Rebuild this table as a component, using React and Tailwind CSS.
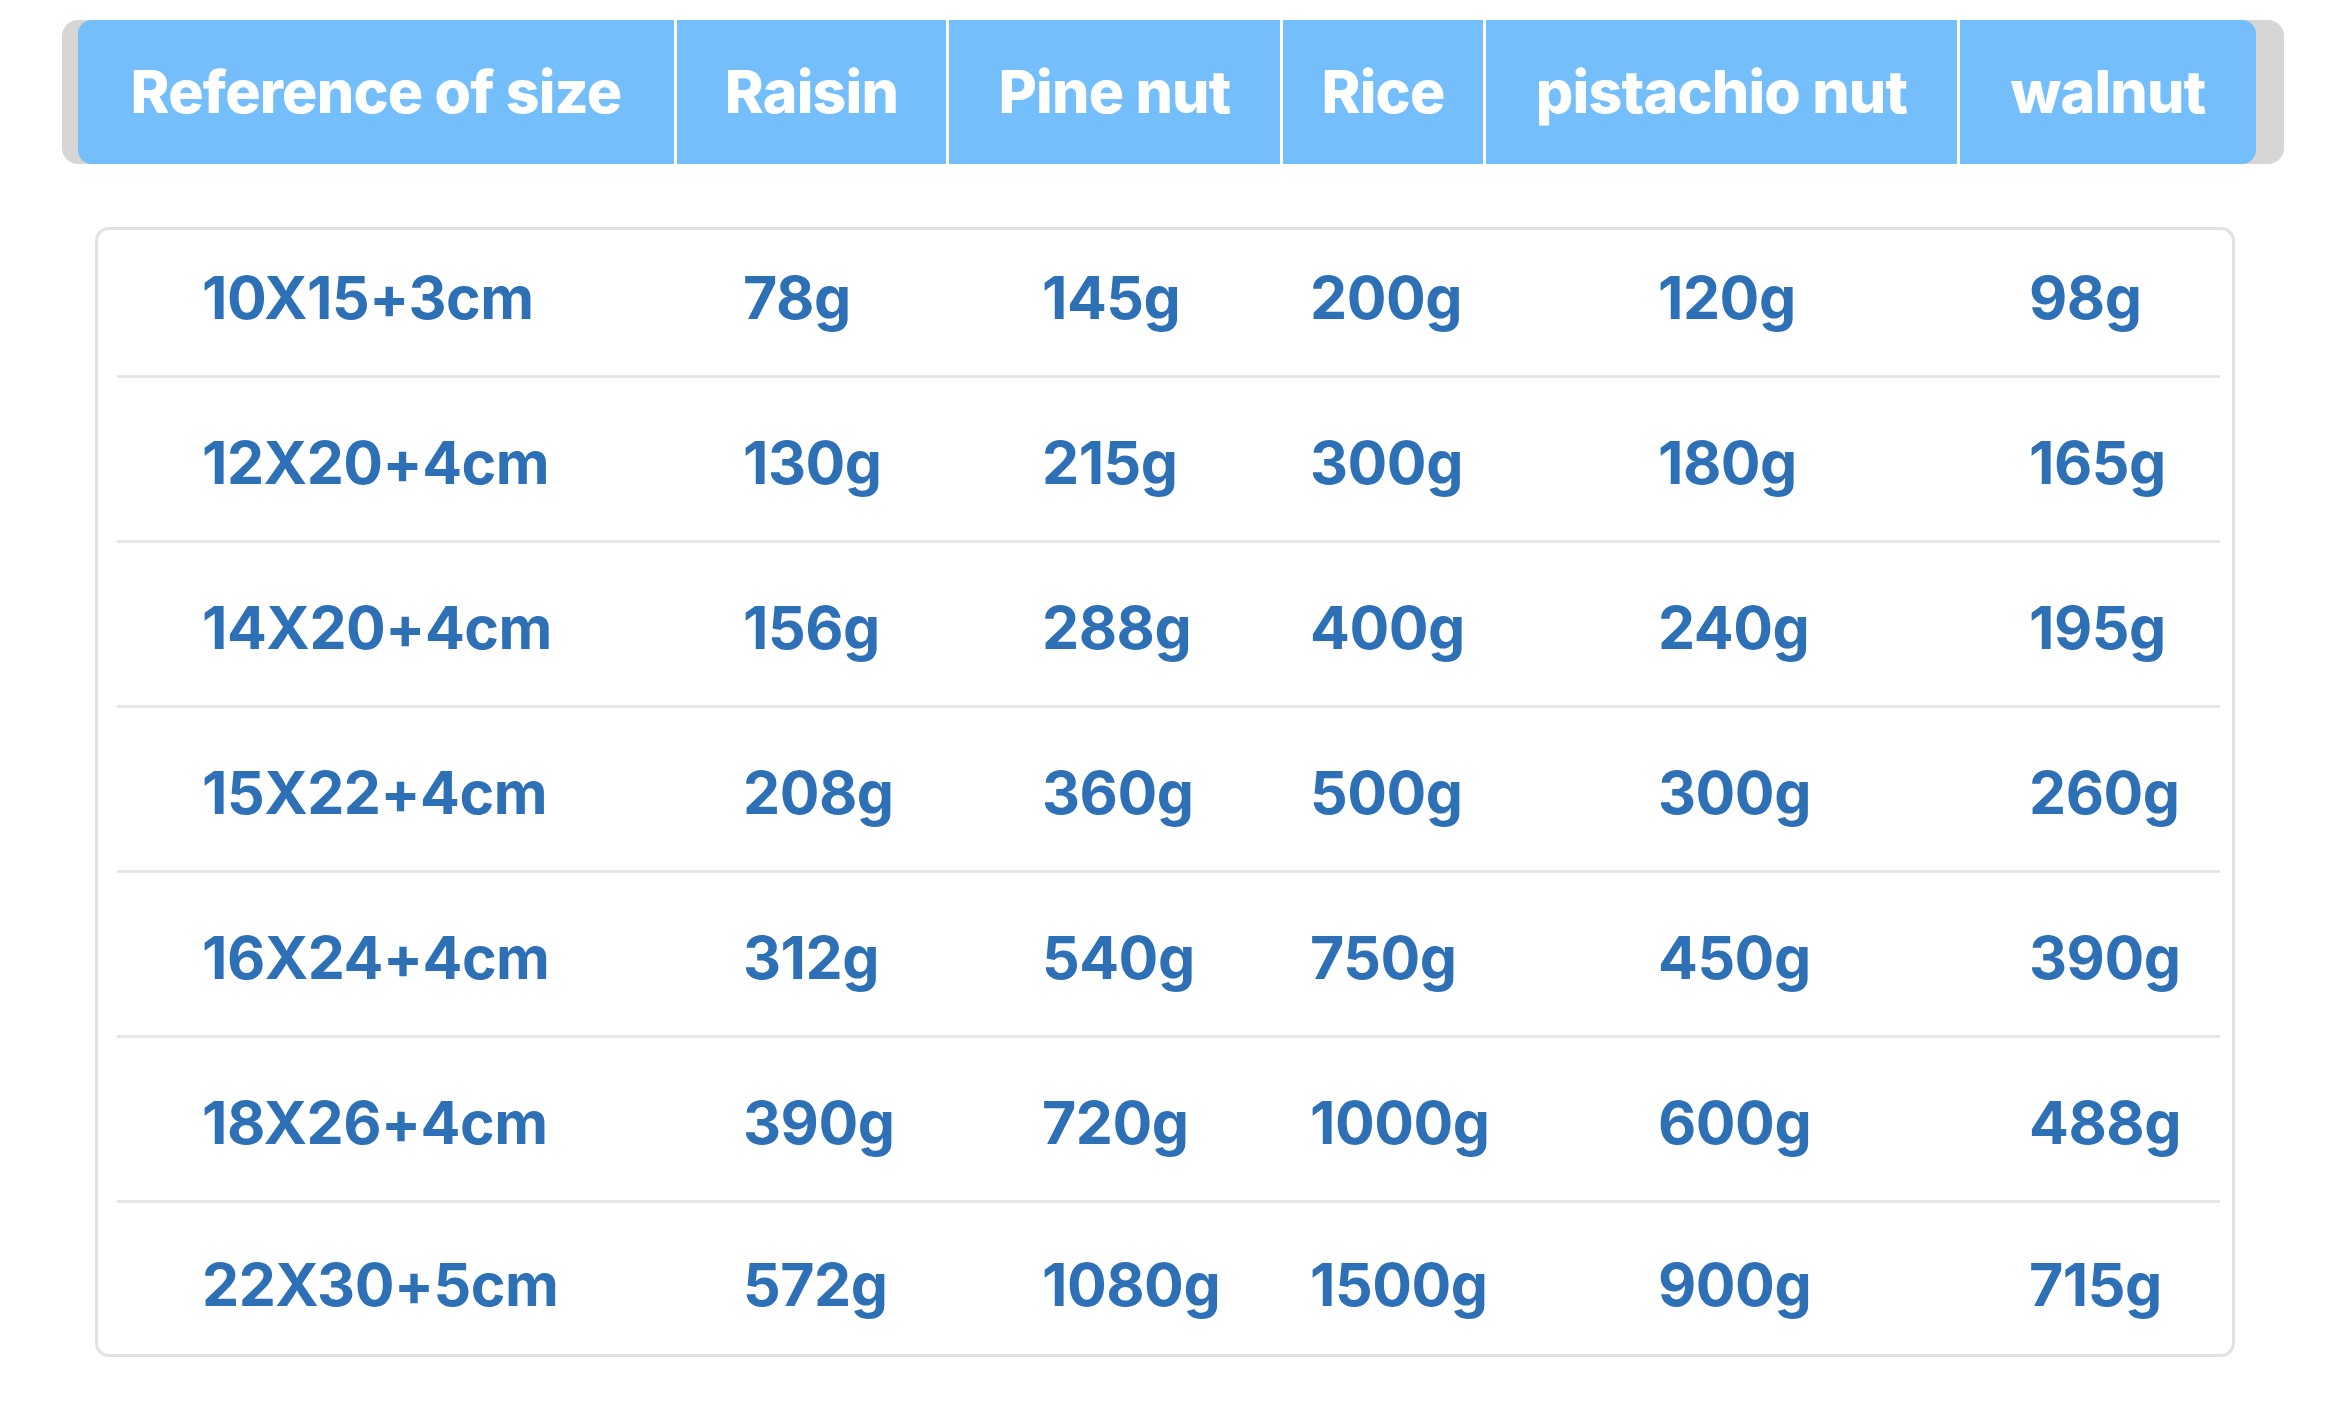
const headers = [
  { label: "Reference of size", w: "w-[596px]" },
  { label: "Raisin", w: "w-[272px]" },
  { label: "Pine nut", w: "w-[334px]" },
  { label: "Rice", w: "w-[203px]" },
  { label: "pistachio nut", w: "w-[474px]" },
  { label: "walnut", w: "flex-1" },
];

const rows = [
  ["10X15+3cm", "78g", "145g", "200g", "120g", "98g"],
  ["12X20+4cm", "130g", "215g", "300g", "180g", "165g"],
  ["14X20+4cm", "156g", "288g", "400g", "240g", "195g"],
  ["15X22+4cm", "208g", "360g", "500g", "300g", "260g"],
  ["16X24+4cm", "312g", "540g", "750g", "450g", "390g"],
  ["18X26+4cm", "390g", "720g", "1000g", "600g", "488g"],
  ["22X30+5cm", "572g", "1080g", "1500g", "900g", "715g"],
];

export default function App() {
  return (
    <div
      className="w-[2344px] h-[1423px] bg-white pt-[20px] pl-[62px] pr-[60px]"
      style={{ fontFamily: "Inter, 'Noto Sans', sans-serif" }}
    >
      {/* header bar */}
      <div className="bg-[#d6d6d6] rounded-[16px] pl-[16px] pr-[28px]">
        <div className="flex h-[144px] bg-[#74bffb] rounded-[14px] overflow-hidden">
          {headers.map((h, i) => (
            <div
              key={h.label}
              className={`${h.w} flex items-center justify-center text-white font-extrabold text-[59px] tracking-[-0.8px] ${
                i > 0 ? "border-l-[3px] border-white" : ""
              }`}
            >
              {h.label}
            </div>
          ))}
        </div>
      </div>

      {/* table card */}
      <div className="mt-[63px] ml-[33px] mr-[49px] border-[3px] border-[#e2e2e2] rounded-[14px] pl-[19px] pr-[12px]">
        {rows.map((r, i) => (
          <div
            key={r[0]}
            className={`grid grid-cols-[626px_299px_268px_348px_371px_1fr] items-center text-[#2e70b6] font-bold text-[59px] tracking-[-0.5px] ${
              i === 0
                ? "h-[148px] pb-[8px]"
                : i === rows.length - 1
                ? "h-[151px] pt-[14px]"
                : "h-[165px] pt-[8px]"
            } ${i < rows.length - 1 ? "border-b-[3px] border-[#e6e6e6]" : ""}`}
          >
            {r.map((c, j) => (
              <div key={j} className={j === 0 ? "pl-[85px]" : ""}>
                {c}
              </div>
            ))}
          </div>
        ))}
      </div>
    </div>
  );
}
